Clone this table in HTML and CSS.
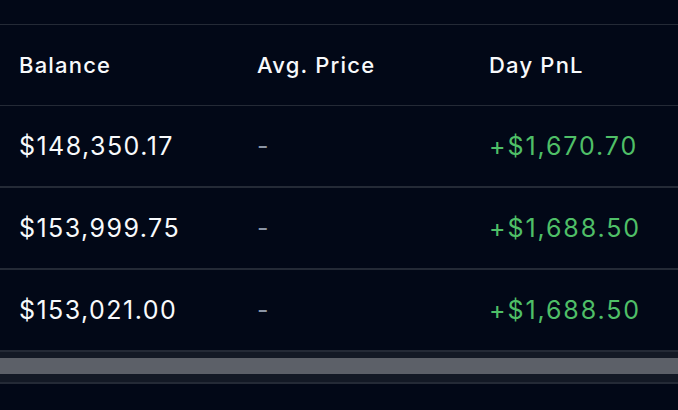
FILE: index.html
```html
<!DOCTYPE html>
<html>
<head>
<meta charset="utf-8">
<link rel="stylesheet" href="styles.css">
</head>
<body>
<div class="page">
  <div class="table">
    <div class="row head">
      <div class="cell">Balance</div>
      <div class="cell">Avg. Price</div>
      <div class="cell">Day PnL</div>
    </div>
    <div class="row">
      <div class="cell">$148,350.17</div>
      <div class="cell dash">-</div>
      <div class="cell pos">+$1,670.70</div>
    </div>
    <div class="row">
      <div class="cell">$153,999.75</div>
      <div class="cell dash">-</div>
      <div class="cell pos">+$1,688.50</div>
    </div>
    <div class="row">
      <div class="cell">$153,021.00</div>
      <div class="cell dash">-</div>
      <div class="cell pos">+$1,688.50</div>
    </div>
  </div>
  <div class="scrollbar"><div class="thumb"></div></div>
</div>
</body>
</html>
```
FILE: styles.css
```css
html, body {
  margin: 0;
  padding: 0;
  background: #020817;
}
.page {
  width: 678px;
  height: 410px;
  overflow: hidden;
  background: #020817;
  font-family: Inter, "Noto Sans", sans-serif;
  color: #f8fafc;
  padding-top: 24px;
  box-sizing: border-box;
}
.table {
  border-top: 1px solid #242a36;
}
.row {
  display: grid;
  grid-template-columns: 238px 232px 1fr;
  height: 80px;
  align-items: center;
  padding-left: 19px;
  border-bottom: 2px solid #242a36;
  font-size: 25px;
  letter-spacing: 1.45px;
}
.row.head {
  height: 80px;
  border-bottom-width: 1px;
  font-size: 22px;
  font-weight: 500;
  letter-spacing: 1.2px;
}
.cell {
  white-space: nowrap;
}
.dash {
  color: #8b95a5;
}
.pos {
  color: #4fbf67;
  letter-spacing: 1.9px;
}
.scrollbar {
  height: 32px;
  box-sizing: border-box;
  background: #131925;
  border-bottom: 2px solid #242a36;
  padding-top: 6px;
}
.thumb {
  width: 100%;
  height: 16px;
  background: #5c6068;
}
```
